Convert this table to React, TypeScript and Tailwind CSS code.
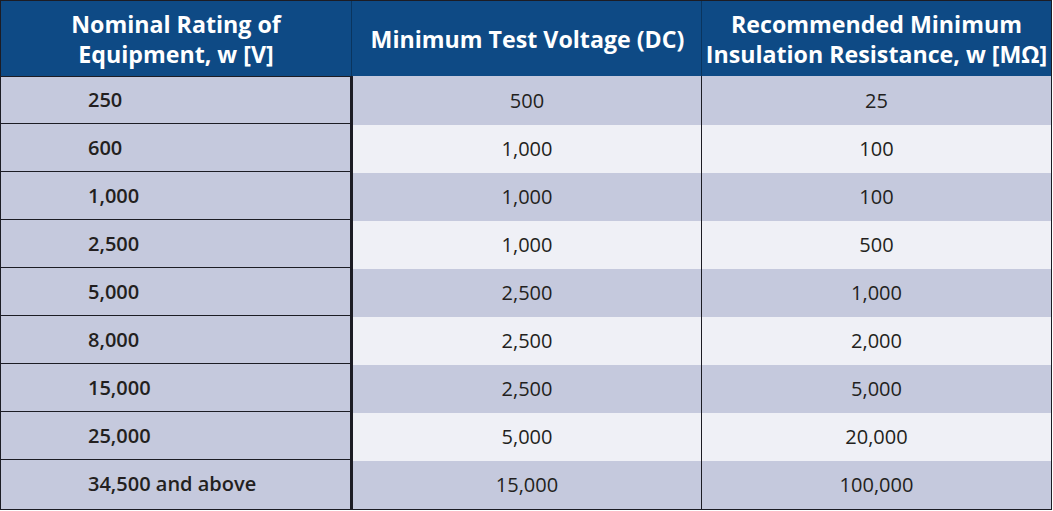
const rows = [
  ["250", "500", "25"],
  ["600", "1,000", "100"],
  ["1,000", "1,000", "100"],
  ["2,500", "1,000", "500"],
  ["5,000", "2,500", "1,000"],
  ["8,000", "2,500", "2,000"],
  ["15,000", "2,500", "5,000"],
  ["25,000", "5,000", "20,000"],
  ["34,500 and above", "15,000", "100,000"],
];

const font = { fontFamily: '"Open Sans", "Noto Sans", sans-serif' };

export default function App() {
  return (
    <div className="bg-white w-[1053px] h-[511px]" style={font}>
      <div className="w-[1052px] border border-[#1c1c24]">
        <div className="flex h-[75px] bg-[#0e4a85] text-white font-bold text-[23.2px] leading-[30px] text-center">
          <div className="w-[351px] border-r border-[#0a355f] flex items-center justify-center pt-[1px]">
            <div>Nominal Rating of<br />Equipment, w [V]</div>
          </div>
          <div className="w-[350px] border-r border-[#0a355f] flex items-center justify-center pl-[2px]">
            Minimum Test Voltage (DC)
          </div>
          <div className="flex-1 flex items-center justify-center">
            <div>Recommended Minimum<br />Insulation Resistance, w [MΩ]</div>
          </div>
        </div>
        <div className="flex text-[20px] text-[#231f20]">
          <div className="w-[352px] border-r-[3px] border-[#1c1c24] bg-[#c5c9dd]">
            {rows.map((r, i) => (
              <div
                key={i}
                className={`h-[48px] flex items-center pl-[87px] font-semibold ${i < rows.length - 1 ? "border-b border-[#1c1c24]" : ""} ${i === 0 ? "border-t border-[#1c1c24]" : ""}`}
              >
                {r[0]}
              </div>
            ))}
          </div>
          <div className="w-[349px] border-r border-[#1c1c24]">
            {rows.map((r, i) => (
              <div
                key={i}
                className={`flex items-center justify-center ${i % 2 === 0 ? "bg-[#c5c9dd]" : "bg-[#eff0f6]"} ${i === 0 ? "h-[49px]" : "h-[48px]"}`}
              >
                {r[1]}
              </div>
            ))}
          </div>
          <div className="flex-1">
            {rows.map((r, i) => (
              <div
                key={i}
                className={`flex items-center justify-center ${i % 2 === 0 ? "bg-[#c5c9dd]" : "bg-[#eff0f6]"} ${i === 0 ? "h-[49px]" : "h-[48px]"}`}
              >
                {r[2]}
              </div>
            ))}
          </div>
        </div>
      </div>
    </div>
  );
}
